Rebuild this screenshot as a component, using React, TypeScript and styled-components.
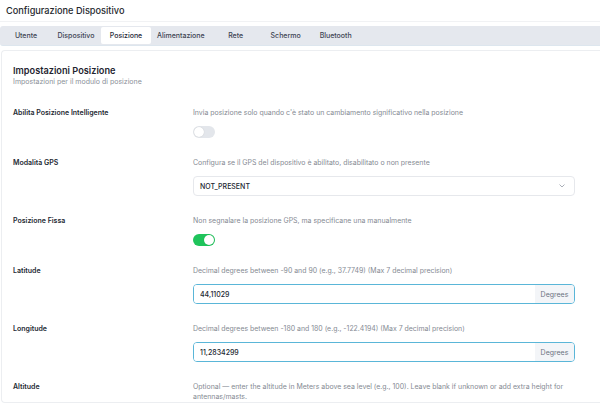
import React, { useState } from "react";
import styled, { createGlobalStyle } from "styled-components";

const Global = createGlobalStyle`
  html, body {
    margin: 0;
    padding: 0;
    background: #ffffff;
    overflow: hidden;
  }
  body {
    font-family: Inter, "Noto Sans", Roboto, sans-serif;
    color: #1f2937;
    -webkit-font-smoothing: antialiased;
  }
  * { box-sizing: border-box; }
`;

const Page = styled.div`
  width: 100%;
  display: flex;
  flex-direction: column;
`;

const Title = styled.h1`
  margin: 0;
  height: 22px;
  padding: 0 6px;
  display: flex;
  align-items: center;
  font-size: 9.2px;
  font-weight: 500;
  color: #25282d;
  border-bottom: 1px solid #f1f2f4;
`;

const TabList = styled.div`
  margin-top: 4px;
  display: flex;
  align-items: center;
  height: 20px;
  padding: 1px 1px;
  background: #e5e8ee;
  border-radius: 3px 0 0 3px;
  border-bottom: 1px solid #dde6ee;
`;

const Tab = styled.button<{ $active?: boolean }>`
  min-width: 50px;
  height: 17px;
  padding: 0 6px;
  border: none;
  border-radius: 2px;
  font-family: inherit;
  font-size: 7px;
  font-weight: 500;
  color: ${(p) => (p.$active ? "#1f2937" : "#3d4452")};
  background: ${(p) => (p.$active ? "#ffffff" : "transparent")};
  cursor: pointer;
`;

const Card = styled.section`
  margin: 4px 0 0 1px;
  border: 1px solid #eceef1;
  border-right: none;
  border-radius: 4px 0 0 4px;
  padding: 13px 11px 0 11px;
`;

const Heading = styled.h2`
  margin: 0;
  font-size: 9.2px;
  line-height: 13px;
  font-weight: 600;
  color: #1f2430;
`;

const Subtitle = styled.p`
  margin: 0;
  font-size: 7px;
  line-height: 10px;
  color: #8a9099;
`;

const Fields = styled.div`
  margin-top: 21px;
  display: flex;
  flex-direction: column;
  gap: 20px;
`;

const Row = styled.div`
  display: grid;
  grid-template-columns: 180px 382px;
`;

const Label = styled.div`
  font-size: 7px;
  line-height: 10px;
  font-weight: 600;
  color: #252a33;
`;

const Control = styled.div`
  display: flex;
  flex-direction: column;
  gap: 8px;
  align-items: flex-start;
`;

const Desc = styled.div`
  font-size: 6.95px;
  line-height: 10px;
  color: #858a93;
`;

const Track = styled.button<{ $on: boolean }>`
  position: relative;
  display: block;
  width: 22px;
  height: 12px;
  padding: 0;
  border: none;
  border-radius: 6px;
  background: ${(p) => (p.$on ? "#1fc45b" : "#e3e6eb")};
  cursor: pointer;
`;

const Knob = styled.span<{ $on: boolean }>`
  position: absolute;
  top: 1px;
  left: ${(p) => (p.$on ? "11px" : "1px")};
  width: 10px;
  height: 10px;
  border-radius: 50%;
  background: #ffffff;
  box-shadow: 0 0 1px rgba(0, 0, 0, 0.2);
`;

const SelectBox = styled.div`
  width: 382px;
  height: 20px;
  display: flex;
  align-items: center;
  justify-content: space-between;
  padding: 0 9px 0 6px;
  border: 1px solid #e6e8ec;
  border-radius: 4px;
  font-size: 7px;
  font-weight: 500;
  color: #222831;
`;

const InputGroup = styled.div`
  width: 382px;
  height: 20px;
  display: flex;
  border: 1.5px solid #5ab6d8;
  border-radius: 4px;
  overflow: hidden;
`;

const Input = styled.input`
  flex: 1;
  min-width: 0;
  border: none;
  outline: none;
  padding: 0 6px;
  font-family: inherit;
  font-size: 7px;
  font-weight: 500;
  color: #222831;
  background: #ffffff;
`;

const Addon = styled.span`
  width: 39px;
  display: flex;
  align-items: center;
  justify-content: center;
  background: #f3f5f8;
  font-size: 7px;
  color: #6b7280;
`;

const Chevron = () => (
  <svg width="6" height="4" viewBox="0 0 6 4" fill="none">
    <path d="M0.8 0.8 L3 3 L5.2 0.8" stroke="#a0a6b0" strokeWidth="0.9" strokeLinecap="round" strokeLinejoin="round" />
  </svg>
);

const Toggle = ({ initial }: { initial: boolean }) => {
  const [on, setOn] = useState(initial);
  return (
    <Track $on={on} onClick={() => setOn(!on)} aria-pressed={on}>
      <Knob $on={on} />
    </Track>
  );
};

const tabs = ["Utente", "Dispositivo", "Posizione", "Alimentazione", "Rete", "Schermo", "Bluetooth"];

export default function App() {
  const [active, setActive] = useState("Posizione");
  return (
    <Page>
      <Global />
      <Title>Configurazione Dispositivo</Title>
      <TabList>
        {tabs.map((t) => (
          <Tab key={t} $active={t === active} onClick={() => setActive(t)}>
            {t}
          </Tab>
        ))}
      </TabList>
      <Card>
        <Heading>Impostazioni Posizione</Heading>
        <Subtitle>Impostazioni per il modulo di posizione</Subtitle>
        <Fields>
          <Row>
            <Label>Abilita Posizione Intelligente</Label>
            <Control>
              <Desc>Invia posizione solo quando c'è stato un cambiamento significativo nella posizione</Desc>
              <Toggle initial={false} />
            </Control>
          </Row>
          <Row>
            <Label>Modalità GPS</Label>
            <Control>
              <Desc>Configura se il GPS del dispositivo è abilitato, disabilitato o non presente</Desc>
              <SelectBox>
                <span>NOT_PRESENT</span>
                <Chevron />
              </SelectBox>
            </Control>
          </Row>
          <Row>
            <Label>Posizione Fissa</Label>
            <Control>
              <Desc>Non segnalare la posizione GPS, ma specificane una manualmente</Desc>
              <Toggle initial={true} />
            </Control>
          </Row>
          <Row>
            <Label>Latitude</Label>
            <Control>
              <Desc>Decimal degrees between -90 and 90 (e.g., 37.7749) (Max 7 decimal precision)</Desc>
              <InputGroup>
                <Input defaultValue="44,11029" />
                <Addon>Degrees</Addon>
              </InputGroup>
            </Control>
          </Row>
          <Row>
            <Label>Longitude</Label>
            <Control>
              <Desc>Decimal degrees between -180 and 180 (e.g., -122.4194) (Max 7 decimal precision)</Desc>
              <InputGroup>
                <Input defaultValue="11,2834299" />
                <Addon>Degrees</Addon>
              </InputGroup>
            </Control>
          </Row>
          <Row>
            <Label>Altitude</Label>
            <Control>
              <Desc>
                Optional — enter the altitude in Meters above sea level (e.g., 100). Leave blank if unknown or add extra height for antennas/masts.
              </Desc>
            </Control>
          </Row>
        </Fields>
      </Card>
    </Page>
  );
}
